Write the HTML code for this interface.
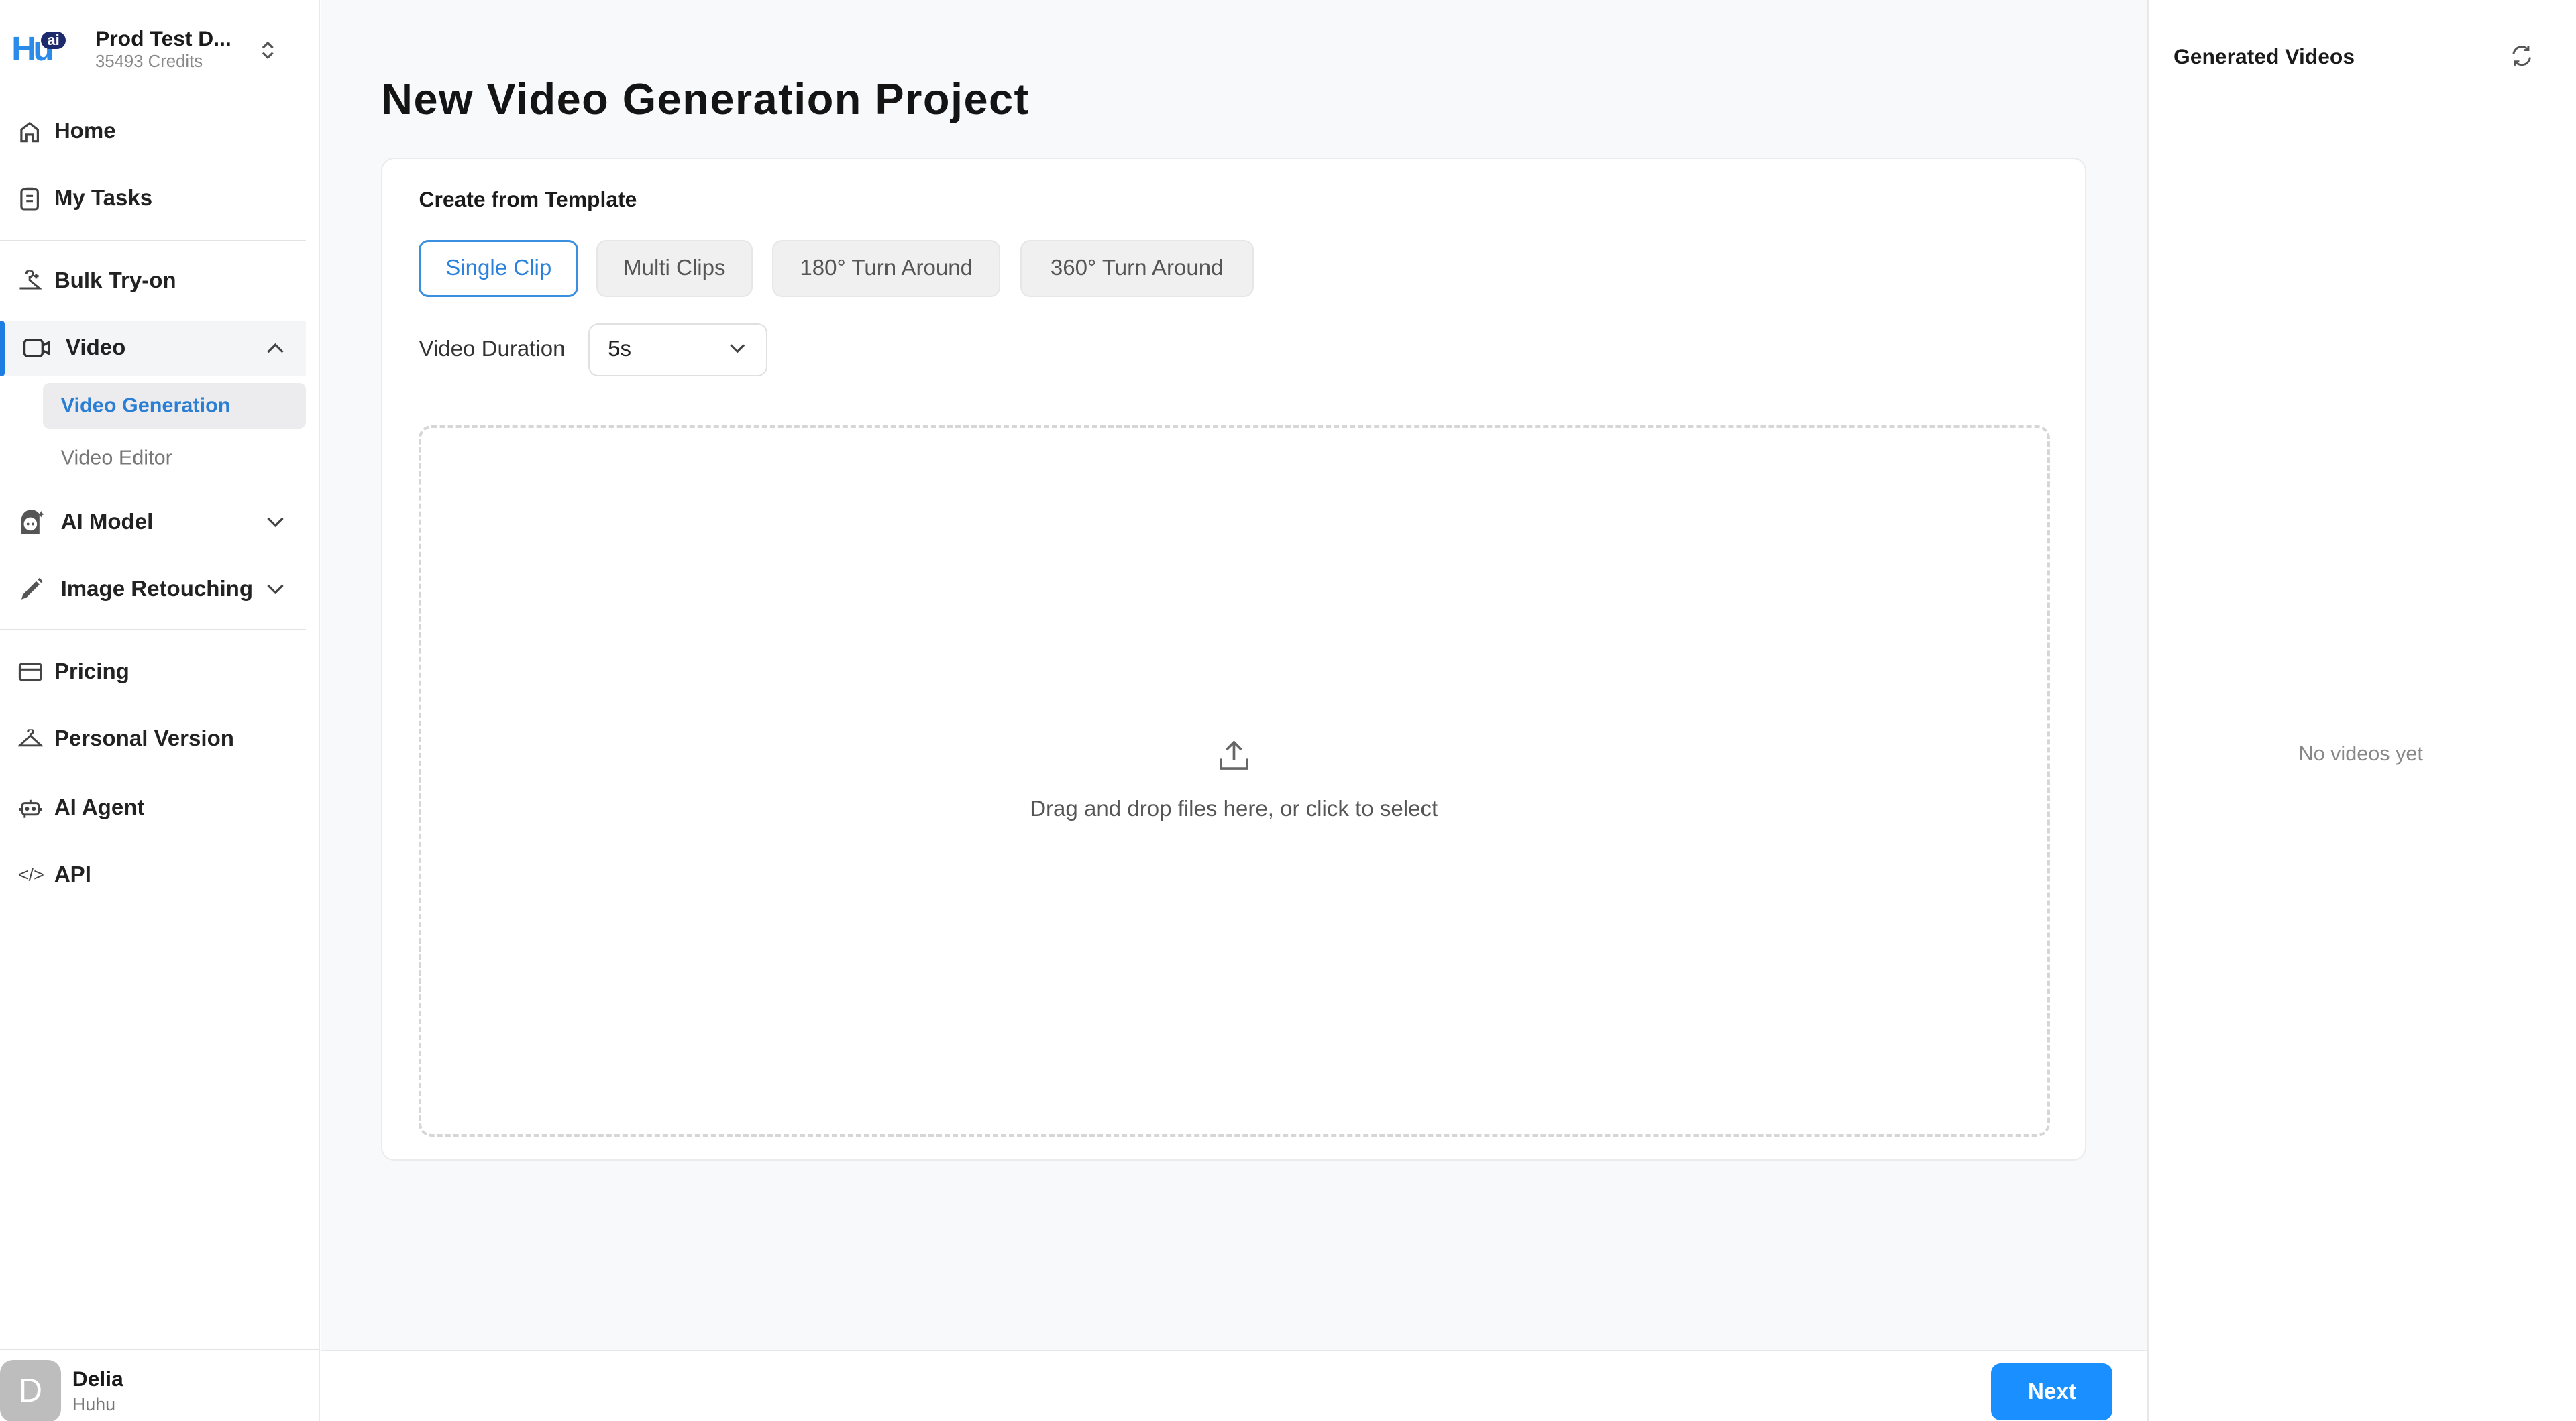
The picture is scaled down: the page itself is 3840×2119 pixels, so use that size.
<!DOCTYPE html>
<html><head><meta charset="utf-8"><style>
html,body{margin:0;padding:0;width:3840px;height:2119px;overflow:hidden;background:#fff}
#r{zoom:2.449;width:1568px;height:866px;position:relative;font-family:"Liberation Sans",sans-serif;color:#1a1a1a}
.a{position:absolute}
.nav{position:absolute;left:33px;font-size:13.5px;font-weight:600;color:#222;transform:translateY(-50%)}
.ic{position:absolute;left:11px;transform:translateY(-50%)}
.chev{position:absolute;left:162px;transform:translateY(-50%)}
.btn{position:absolute;top:146px;height:35px;border-radius:6px;background:#f0f0f0;border:1px solid #e6e6e6;box-sizing:border-box;font-size:13.5px;color:#555;display:flex;align-items:center;justify-content:center}
</style></head><body><div id="r">
<div class="a" style="left:0;top:0;width:194px;height:866px;background:#fff;border-right:1px solid #e8e8e8"></div>
<div class="a" style="left:7px;top:17px;font-size:21px;font-weight:700;color:#2a8be8;letter-spacing:-2px">Hu</div>
<div class="a" style="left:25px;top:19px;width:15px;height:11px;border-radius:6px;background:#1d2a6b;color:#fff;font-size:9px;font-weight:700;text-align:center;line-height:11px">ai</div>
<div class="a" style="left:58px;top:16px;font-size:13px;font-weight:700">Prod Test D...</div>
<div class="a" style="left:58px;top:32px;font-size:10.5px;color:#888">35493 Credits</div>
<svg class="a" style="left:158px;top:24px" width="10" height="13" viewBox="0 0 10 13" fill="none" stroke="#555" stroke-width="1.3"><path d="M2 5l3-3 3 3M2 8l3 3 3-3"/></svg>

<svg class="ic" style="top:80px" width="14" height="14" viewBox="0 0 14 14" fill="none" stroke="#444" stroke-width="1.3"><path d="M2 13V6l5-4 5 4v7H9V9H5v4z"/></svg>
<div class="nav" style="top:80px">Home</div>
<svg class="ic" style="top:121px" width="14" height="15" viewBox="0 0 14 15" fill="none" stroke="#444" stroke-width="1.3"><rect x="2" y="2" width="10" height="12" rx="1.5"/><path d="M5 6h4M5 9h4M5 1.5h4"/></svg>
<div class="nav" style="top:121px">My Tasks</div>
<div class="a" style="left:0;top:146px;width:186px;height:1px;background:#e3e3e3"></div>
<svg class="ic" style="top:171px" width="15" height="13" viewBox="0 0 15 13" fill="none" stroke="#444" stroke-width="1.2"><path d="M1 11h12L7 6V4a2 2 0 1 0-2-2M11 2v3M9.5 3.5h3"/></svg>
<div class="nav" style="top:171px">Bulk Try-on</div>
<div class="a" style="left:0;top:195px;width:186px;height:34px;background:#f4f5f7"></div>
<div class="a" style="left:0;top:195px;width:3px;height:34px;background:#1f7ce0;border-radius:0 2px 2px 0"></div>
<svg class="ic" style="top:212px;left:14px" width="18" height="13" viewBox="0 0 18 13" fill="none" stroke="#333" stroke-width="1.4"><rect x="1" y="1.5" width="11" height="10" rx="2"/><path d="M12 5l4-2v7l-4-2"/></svg>
<div class="nav" style="top:212px;left:40px">Video</div>
<svg class="chev" style="top:212px" width="11" height="7" viewBox="0 0 11 7" fill="none" stroke="#444" stroke-width="1.3"><path d="M1 6l4.5-4.5L10 6"/></svg>
<div class="a" style="left:26px;top:233px;width:160px;height:28px;background:#ececee;border-radius:4px"></div>
<div class="nav" style="top:247px;left:37px;font-size:12.5px;color:#2a7fd4">Video Generation</div>
<div class="nav" style="top:279px;left:37px;font-size:12.5px;color:#777;font-weight:400">Video Editor</div>
<svg class="ic" style="top:318px" width="17" height="16" viewBox="0 0 17 16"><path d="M2 15V6a6 6 0 0 1 11-3v12z" fill="#555"/><circle cx="7.5" cy="9" r="4" fill="#fff"/><circle cx="6" cy="9" r=".8" fill="#555"/><circle cx="9" cy="9" r=".8" fill="#555"/><path d="M14 1l.6 1.4L16 3l-1.4.6L14 5l-.6-1.4L12 3l1.4-.6z" fill="#555"/></svg>
<div class="nav" style="top:318px;left:37px">AI Model</div>
<svg class="chev" style="top:318px" width="11" height="7" viewBox="0 0 11 7" fill="none" stroke="#444" stroke-width="1.3"><path d="M1 1l4.5 4.5L10 1"/></svg>
<svg class="ic" style="top:359px" width="16" height="16" viewBox="0 0 16 16"><path d="M2 14l1-3 8-8 2 2-8 8z" fill="#555"/><path d="M12 2l1-1 2 2-1 1z" fill="#555"/></svg>
<div class="nav" style="top:359px;left:37px">Image Retouching</div>
<svg class="chev" style="top:359px" width="11" height="7" viewBox="0 0 11 7" fill="none" stroke="#444" stroke-width="1.3"><path d="M1 1l4.5 4.5L10 1"/></svg>
<div class="a" style="left:0;top:383px;width:186px;height:1px;background:#e3e3e3"></div>
<svg class="ic" style="top:409px" width="15" height="12" viewBox="0 0 15 12" fill="none" stroke="#444" stroke-width="1.3"><rect x="1" y="1" width="13" height="10" rx="1.5"/><path d="M1 4.5h13"/></svg>
<div class="nav" style="top:409px">Pricing</div>
<svg class="ic" style="top:450px" width="15" height="12" viewBox="0 0 15 12" fill="none" stroke="#444" stroke-width="1.2"><path d="M7.5 4V3a1.5 1.5 0 1 0-1.5-1.5M7.5 4L1 10h13z"/></svg>
<div class="nav" style="top:450px">Personal Version</div>
<svg class="ic" style="top:492px" width="15" height="14" viewBox="0 0 15 14" fill="none" stroke="#444" stroke-width="1.2"><rect x="2.5" y="4" width="10" height="7" rx="1.5"/><path d="M7.5 4V2M1 7v2M14 7v2M4 11v2"/><circle cx="5.5" cy="7.5" r=".6" fill="#444"/><circle cx="9.5" cy="7.5" r=".6" fill="#444"/></svg>
<div class="nav" style="top:492px">AI Agent</div>
<div class="ic" style="top:533px;font-size:11px;color:#444">&lt;/&gt;</div>
<div class="nav" style="top:533px">API</div>
<div class="a" style="left:0;top:821px;width:194px;height:1px;background:#e3e3e3"></div>
<div class="a" style="left:0;top:828px;width:37px;height:38px;border-radius:8px;background:#bdbdbd;color:#fff;font-size:20px;text-align:center;line-height:38px">D</div>
<div class="a" style="left:44px;top:832px;font-size:13px;font-weight:600">Delia</div>
<div class="a" style="left:44px;top:849px;font-size:11px;color:#777">Huhu</div>
<div class="a" style="left:195px;top:0;width:1112px;height:866px;background:#f8f9fa"></div>
<div class="a" style="left:232px;top:45px;font-size:26.5px;font-weight:700;color:#141414;letter-spacing:0.6px">New Video Generation Project</div>
<div class="a" style="left:232px;top:96px;width:1038px;height:611px;background:#fff;border:1px solid #ebebeb;border-radius:8px;box-sizing:border-box"></div>
<div class="a" style="left:255px;top:114px;font-size:13px;font-weight:700">Create from Template</div>
<div class="btn" style="left:255px;width:97px;background:#fff;border:1.5px solid #3b8fe0;color:#2a82dc">Single Clip</div>
<div class="btn" style="left:363px;width:95px">Multi Clips</div>
<div class="btn" style="left:470px;width:139px">180° Turn Around</div>
<div class="btn" style="left:621px;width:142px">360° Turn Around</div>
<div class="a" style="left:255px;top:205px;font-size:13.5px;color:#333">Video Duration</div>
<div class="a" style="left:358px;top:197px;width:109px;height:32px;border:1px solid #e0e0e0;border-radius:6px;box-sizing:border-box;background:#fff"></div>
<div class="a" style="left:370px;top:205px;font-size:13.5px;color:#222">5s</div>
<svg class="a" style="left:444px;top:209px" width="10" height="7" viewBox="0 0 10 7" fill="none" stroke="#444" stroke-width="1.3"><path d="M1 1l4 4 4-4"/></svg>
<div class="a" style="left:255px;top:259px;width:993px;height:433px;border:2px dashed #d6d6d6;border-radius:8px;box-sizing:border-box"></div>
<svg class="a" style="left:741px;top:450px" width="20" height="20" viewBox="0 0 20 20" fill="none" stroke="#666" stroke-width="1.5"><path d="M10 13V2M5.5 6.5L10 2l4.5 4.5M2 12v6h16v-6"/></svg>
<div class="a" style="left:551px;top:485px;width:400px;text-align:center;font-size:13.5px;color:#555">Drag and drop files here, or click to select</div>
<div class="a" style="left:195px;top:822px;width:1112px;height:44px;background:#fff;border-top:1px solid #e8e8e8"></div>
<div class="a" style="left:1212px;top:830px;width:74px;height:35px;background:#1a8fff;border-radius:6px;color:#fff;font-size:13.5px;font-weight:600;text-align:center;line-height:35px">Next</div>
<div class="a" style="left:1307px;top:0;width:261px;height:866px;background:#fff;border-left:1px solid #e8e8e8"></div>
<div class="a" style="left:1323px;top:27px;font-size:13px;font-weight:700">Generated Videos</div>
<svg class="a" style="left:1528px;top:27px" width="14" height="14" viewBox="0 0 14 14" fill="none" stroke="#555" stroke-width="1.2"><path d="M2 6a5 5 0 0 1 9-2.5M12 8a5 5 0 0 1-9 2.5M11 1v2.5H8.5M3 13v-2.5h2.5"/></svg>
<div class="a" style="left:1360px;top:452px;width:154px;text-align:center;font-size:12.5px;color:#888">No videos yet</div>
</div></body></html>
